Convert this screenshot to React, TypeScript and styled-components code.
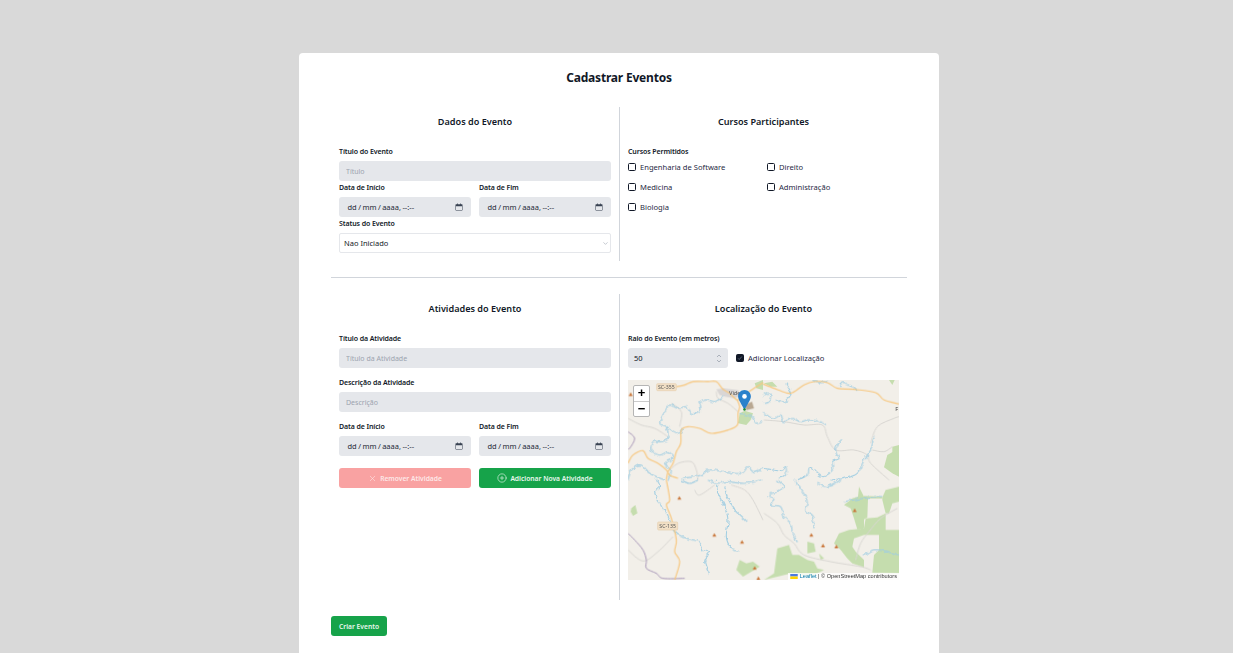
import React from 'react';
import styled, { createGlobalStyle } from 'styled-components';
import { ChevronDown, CirclePlus, X } from 'lucide-react';

const GlobalStyle = createGlobalStyle`
  html, body {
    margin: 0;
    height: 653px;
    overflow: hidden;
    background: #d9d9d9;
    font-family: 'Noto Sans', 'Open Sans', sans-serif;
    color: #111827;
  }
  * { box-sizing: border-box; }
`;

const Card = styled.main`
  width: 640px;
  height: 640px;
  margin: 53px 0 0 299px;
  padding: 16px 32px;
  background: #fff;
  border-radius: 4px;
`;

const PageTitle = styled.h1`
  margin: 0 0 16px;
  height: 22px;
  font-size: 12px;
  line-height: 18px;
  font-weight: 700;
  letter-spacing: -0.2px;
  text-align: center;
`;

const Row = styled.section`
  display: grid;
  grid-template-columns: 288px 288px;
`;

const Column = styled.div<{ $divided?: boolean }>`
  padding: 8px;
  border-left: ${(p) => (p.$divided ? '1px solid #d1d5db' : 'none')};
`;

const Heading = styled.h2`
  margin: 0 0 16px;
  height: 14px;
  font-size: 9.1px;
  line-height: 14px;
  font-weight: 600;
  text-align: center;
`;

const Divider = styled.hr`
  margin: 16px 0;
  height: 1px;
  border: 0;
  background: #d1d5db;
`;

const Label = styled.label`
  display: block;
  height: 12px;
  margin-bottom: 4px;
  font-size: 7px;
  line-height: 13px;
  font-weight: 600;
  letter-spacing: -0.1px;
`;

const Stack = styled.div<{ $gap: number }>`
  display: flex;
  flex-direction: column;
  gap: ${(p) => p.$gap}px;
`;

const TwoUp = styled.div`
  display: grid;
  grid-template-columns: 1fr 1fr;
  gap: 8px;
`;

const TextInput = styled.input`
  display: block;
  width: 100%;
  height: 20px;
  padding: 0 7px;
  border: 0;
  border-radius: 3px;
  background: #e5e7eb;
  font: inherit;
  font-size: 7px;
  color: #111827;
  &::placeholder { color: #9ca3af; opacity: 1; }
`;

const DateBox = styled.div`
  display: flex;
  align-items: center;
  justify-content: space-between;
  height: 20px;
  padding: 0 8px 0 8.5px;
  border-radius: 3px;
  background: #e5e7eb;
  font-size: 7.5px;
  word-spacing: -0.5px;
  color: #1f2937;
`;

const SelectWrap = styled.div`
  position: relative;
  height: 20px;
  color: #9ca3af;
  svg {
    position: absolute;
    right: 2px;
    top: 7px;
  }
`;

const Select = styled.select`
  display: block;
  width: 100%;
  height: 20px;
  padding: 0 4px;
  appearance: none;
  border: 1px solid #e5e7eb;
  border-radius: 2px;
  background: #fff;
  font: inherit;
  font-size: 7.5px;
  color: #111827;
`;

const ButtonRow = styled(TwoUp)`
  margin-top: 4px;
`;

const ActionButton = styled.button<{ $variant: 'danger' | 'success' }>`
  display: flex;
  align-items: center;
  justify-content: center;
  gap: 3px;
  height: 20px;
  padding: 0 8px;
  border: 0;
  border-radius: 3px;
  background: ${(p) => (p.$variant === 'danger' ? '#f9a2a2' : '#16a34a')};
  color: ${(p) => (p.$variant === 'danger' ? '#fde8e8' : '#e9f7ee')};
  font: inherit;
  font-size: 6.7px;
  font-weight: 600;
`;

const SubmitButton = styled(ActionButton)`
  width: 56px;
  margin-top: 16px;
  padding: 0;
`;

const CourseGrid = styled.div`
  display: grid;
  grid-template-columns: 139px 1fr;
  row-gap: 8px;
`;

const CheckLine = styled.label`
  display: flex;
  align-items: center;
  gap: 4px;
  height: 12px;
  font-size: 7.6px;
  color: #1f2a44;
`;

const Box = styled.span<{ $checked?: boolean }>`
  display: flex;
  align-items: center;
  justify-content: center;
  width: 8px;
  height: 8px;
  flex: none;
  border: 1px solid #111827;
  border-radius: 1.5px;
  background: ${(p) => (p.$checked ? '#111827' : '#fff')};
`;

const RadiusRow = styled.div`
  display: flex;
  align-items: center;
  gap: 8px;
  margin-bottom: 12px;
`;

const NumberBox = styled(DateBox)`
  width: 100px;
  padding: 0 6px;
  color: #111827;
`;

const MapFrame = styled.div`
  position: relative;
  height: 200px;
  margin-bottom: 12px;
  overflow: hidden;
  background: #f2efe9;
  line-height: 0;
`;

const ZoomControl = styled.div`
  position: absolute;
  left: 5px;
  top: 5px;
  width: 17px;
  border: 1px solid #b5b5b5;
  border-radius: 2px;
  background: #fff;
`;

const ZoomButton = styled.div<{ $first?: boolean }>`
  height: 15px;
  border-top: ${(p) => (p.$first ? 'none' : '1px solid #ccc')};
  font-family: 'Liberation Sans', sans-serif;
  font-size: 13px;
  line-height: 14px;
  font-weight: 700;
  text-align: center;
  color: #000;
`;

const Attribution = styled.div`
  position: absolute;
  right: 0;
  bottom: 0;
  display: flex;
  align-items: center;
  gap: 1.5px;
  height: 7px;
  padding: 0 2px;
  background: rgba(255, 255, 255, 0.8);
  font-family: 'Liberation Sans', sans-serif;
  font-size: 5.6px;
  line-height: 7px;
  white-space: nowrap;
  color: #333;
  a { color: #0078a8; text-decoration: none; }
`;

const Marker = styled.svg`
  position: absolute;
  left: 110px;
  top: 10px;
`;

const CalendarIcon = () => (
  <svg width="8" height="8" viewBox="0 0 16 16" fill="#374151">
    <path d="M2 2.5h2V1h1.5v1.5h5V1H12v1.5h2c.6 0 1 .4 1 1V14c0 .6-.4 1-1 1H2c-.6 0-1-.4-1-1V3.500c0-.6.4-1 1-1zm0 4V14h12V6.500H2z" />
  </svg>
);

const DateField = () => (
  <DateBox>
    <span>dd / mm / aaaa, --:--</span>
    <CalendarIcon />
  </DateBox>
);

const Check = ({ label, checked }: { label: string; checked?: boolean }) => (
  <CheckLine>
    <Box $checked={checked}>
      {checked && (
        <svg width="6" height="6" viewBox="0 0 8 8" fill="none" stroke="#6b7589" strokeWidth="1">
          <path d="M1.500 4.500 3 6l3.500-4" />
        </svg>
      )}
    </Box>
    {label}
  </CheckLine>
);

// map features, traced per quadrant at 3x scale [dx, dy, points]
type Line = [number, number, string];

const ROADS: Line[] = [
  [0, 0, '145,20 170,15 195,5 240,5 265,5 285,28 305,40 328,60 340,50 370,30 405,8'],
  [0, 0, '328,60 335,80 330,100 328,135 300,150 250,160 215,145 180,140 160,150 158,190 145,215 135,250 120,275 115,300'],
  [0, 0, '0,250 15,225 45,212 60,235 90,250 115,270 125,285 150,295'],
  [408, 0, '-3,12 30,25 65,38 85,38 120,15 150,5 190,8 220,25 270,28 335,38 360,60 405,72'],
  [0, 300, '115,0 125,60 115,75 130,115 145,180 140,215 155,245 140,300'],
];

const MINOR: Line[] = [
  [0, 0, '0,115 40,135 80,145 120,170'],
  [0, 0, '130,70 160,95 155,140'],
  [0, 0, '120,275 150,250 190,245 205,270 210,300'],
  [0, 0, '265,35 270,55 300,70 330,95'],
  [408, 0, '0,120 60,125 120,135 175,135 190,170 215,210 270,210 310,225 320,250 375,300'],
  [408, 0, '320,190 340,140 390,115 405,110'],
  [408, 0, '325,210 360,215 385,200'],
  [0, 300, '0,210 45,243 90,215 135,170'],
  [0, 300, '200,30 215,45 260,15'],
  [0, 300, '310,15 350,30 375,60 405,120'],
  [408, 300, '0,100 40,130 60,165 90,190 120,225 200,245 290,260 320,270'],
  [408, 300, '275,240 290,190 315,155 350,115 400,85'],
];

const RIVERS: Line[] = [
  [0, 0, '285,50 260,65 235,60 215,70 215,95 190,100 175,80 150,85 125,75 110,95 95,130 115,140 120,175 100,185 75,185 70,210 95,225 120,215 135,235 110,250 130,270 120,300'],
  [0, 0, '0,300 10,270 40,255 65,280 110,300'],
  [0, 0, '115,140 150,160 165,145'],
  [0, 0, '165,295 220,285 240,270 290,275 340,280 360,260 375,275 405,265'],
  [0, 0, '335,100 370,110 385,130 405,125'],
  [408, 0, '-3,100 30,115 50,105 60,125 85,115 110,125 130,120 160,122 185,135'],
  [408, 0, '230,178 215,210 225,235 205,245 205,270 175,290 145,265 135,265 130,285 100,300'],
  [408, 0, '0,265 30,270 50,272 65,260 65,285 45,295'],
  [408, 0, '330,170 320,210 300,240 280,280 240,295 200,300'],
  [408, 0, '145,0 165,8 190,5'],
  [408, 0, '225,20 240,8 280,30'],
  [408, 0, '0,70 15,65 20,40 0,45'],
  [408, 0, '35,60 60,65 80,40 65,10'],
  [0, 300, '85,0 95,20 80,35 90,60 110,90 125,120 140,155 175,175 215,185 225,210 245,215 230,245 245,285'],
  [0, 300, '265,0 270,40 290,80 300,120 295,170 310,205 335,215'],
  [0, 300, '290,20 300,55 320,90 355,125'],
  [0, 300, '160,0 185,10 210,0'],
  [0, 300, '240,0 265,10 300,5 350,10 400,0'],
  [408, 300, '40,0 60,20 40,35 15,45 30,60 20,75 50,80 60,110 80,130 85,155 100,190'],
  [408, 300, '90,0 105,20 125,50 130,70 125,90 145,110 150,145'],
  [408, 300, '160,10 190,20 230,0'],
  [408, 300, '240,65 270,60 330,50 355,50'],
  [408, 300, '300,225 330,210 370,215 405,225'],
];

const WOODS: Line[] = [
  [0, 0, '335,100 350,92 375,100 368,120 355,135 330,130'],
  [0, 0, '380,10 405,0 405,30 385,25'],
  [408, 0, '0,10 25,5 40,20 20,20'],
  [408, 0, '370,225 405,205 405,290 385,280 360,262'],
  [408, 0, '385,200 405,195 405,215 385,220'],
  [408, 0, '375,0 392,0 385,15'],
  [0, 300, '335,240 355,250 375,245 395,260 370,275 345,290 325,270'],
  [0, 300, '10,85 22,75 28,100 15,108 8,95'],
  [408, 300, '240,75 265,55 282,50 285,20 300,50 312,55 310,112 300,118 300,145 280,148 270,115 260,85'],
  [408, 300, '300,48 355,50 355,55 300,55'],
  [408, 300, '355,52 365,30 405,20 405,65 385,70 375,100 365,100 355,60'],
  [408, 300, '225,160 255,150 300,145 305,115 340,112 365,100 365,150 405,150 405,280 325,278 330,225 345,210 345,165 300,165 270,175 265,200 275,215 300,240 300,262 265,250 250,235 230,210 210,190'],
  [408, 300, '40,205 75,195 85,225 105,225 130,240 150,245 160,265 180,270 140,290 80,280 0,300 30,280'],
  [408, 300, '130,185 150,190 155,215 130,220'],
  [408, 300, '165,220 180,235 170,240'],
];

const BORDERS: Line[] = [
  [0, 0, '0,155 20,175 5,205 0,205'],
  [0, 300, '0,160 20,180 45,210 55,240 55,265 85,280 105,295 170,295'],
];

const PEAKS: [number, number][] = [
  [8, 43], [154, 354], [259, 465], [342, 486], [380, 564], [391, 595], [680, 391], [550, 465], [585, 497], [625, 500],
];

// catmull-rom through the traced points, so the rivers don't look angular
const smooth = (points: string) => {
  const p = points.split(' ').map((s) => s.split(',').map(Number));
  let d = `M${p[0][0]} ${p[0][1]}`;
  for (let i = 0; i < p.length - 1; i++) {
    const a = p[Math.max(i - 1, 0)];
    const b = p[i];
    const c = p[i + 1];
    const e = p[Math.min(i + 2, p.length - 1)];
    d += `C${b[0] + (c[0] - a[0]) / 6} ${b[1] + (c[1] - a[1]) / 6} ${c[0] - (e[0] - b[0]) / 6} ${c[1] - (e[1] - b[1]) / 6} ${c[0]} ${c[1]}`;
  }
  return d;
};

const Features = ({ lines, color, width, filter }: { lines: Line[]; color: string; width: number; filter?: string }) => (
  <g fill="none" stroke={color} strokeWidth={width} strokeLinejoin="round" filter={filter}>
    {lines.map(([dx, dy, p], i) => (
      <path key={i} d={smooth(p)} transform={`translate(${dx} ${dy})`} />
    ))}
  </g>
);

const MapDrawing = () => (
  <svg width="271" height="200" viewBox="0 0 813 600">
    <defs>
      <filter id="tile" filterUnits="userSpaceOnUse" x="0" y="0" width="813" height="600">
        <feGaussianBlur stdDeviation="0.8" />
      </filter>
      <filter id="meander" filterUnits="userSpaceOnUse" x="0" y="0" width="813" height="600">
        <feTurbulence type="fractalNoise" baseFrequency="0.07" numOctaves="2" seed="4" />
        <feDisplacementMap in="SourceGraphic" scale="14" xChannelSelector="R" yChannelSelector="G" />
      </filter>
    </defs>
    <g filter="url(#tile)">
      {WOODS.map(([dx, dy, p], i) => (
        <polygon key={i} points={p} transform={`translate(${dx} ${dy})`} fill="#c5ddae" />
      ))}
      <path d="M265 28 285 25 330 30 340 45 320 55 290 50 275 45z" fill="#d9d6d5" />
      <path d="M350 75 372 65 378 85 355 90z" fill="#b9a892" />
      <Features lines={MINOR} color="#d8d6d2" width={3} />
      <Features lines={BORDERS} color="#a897b8" width={3} />
      <Features lines={RIVERS} color="#9fcde2" width={3.2} filter="url(#meander)" />
      <Features lines={ROADS} color="#f7c77f" width={3.5} />
      {PEAKS.map(([x, y], i) => (
        <path key={i} d={`M${x - 6} ${y + 5}L${x} ${y - 6}L${x + 6} ${y + 5}z`} fill="#c9763a" />
      ))}
    </g>
    <rect x="86" y="11" width="59" height="21" rx="3" fill="#f2e0c6" stroke="#e6cfae" strokeWidth="2" />
    <text x="115" y="27" fontSize="15.5" fontFamily="Noto Sans, sans-serif" textAnchor="middle" fill="#555">SC-355</text>
    <rect x="89" y="426" width="60" height="24" rx="3" fill="#f2e0c6" stroke="#e6cfae" strokeWidth="2" />
    <text x="119" y="443" fontSize="15.5" fontFamily="Noto Sans, sans-serif" textAnchor="middle" fill="#555">SC-135</text>
    <text x="303" y="46" fontSize="17" fontFamily="Noto Sans, sans-serif" fill="#555">Vide</text>
    <text x="802" y="92" fontSize="17" fontFamily="Noto Sans, sans-serif" fill="#444">F</text>
  </svg>
);

export default function App() {
  return (
    <>
      <GlobalStyle />
      <Card>
        <PageTitle>Cadastrar Eventos</PageTitle>
        <Row>
          <Column>
            <Heading>Dados do Evento</Heading>
            <Label>Título do Evento</Label>
            <TextInput placeholder="Título" />
            <TwoUp>
              <div>
                <Label>Data de Início</Label>
                <DateField />
              </div>
              <div>
                <Label>Data de Fim</Label>
                <DateField />
              </div>
            </TwoUp>
            <Label>Status do Evento</Label>
            <SelectWrap>
              <Select defaultValue="Nao Iniciado">
                <option>Nao Iniciado</option>
              </Select>
              <ChevronDown size={7} strokeWidth={2} />
            </SelectWrap>
          </Column>
          <Column $divided>
            <Heading>Cursos Participantes</Heading>
            <Label>Cursos Permitidos</Label>
            <CourseGrid>
              <Check label="Engenharia de Software" />
              <Check label="Direito" />
              <Check label="Medicina" />
              <Check label="Administração" />
              <Check label="Biologia" />
            </CourseGrid>
          </Column>
        </Row>
        <Divider />
        <Row>
          <Column>
            <Heading>Atividades do Evento</Heading>
            <Stack $gap={8}>
              <div>
                <Label>Título da Atividade</Label>
                <TextInput placeholder="Título da Atividade" />
              </div>
              <div>
                <Label>Descrição da Atividade</Label>
                <TextInput placeholder="Descrição" />
              </div>
              <TwoUp>
                <div>
                  <Label>Data de Início</Label>
                  <DateField />
                </div>
                <div>
                  <Label>Data de Fim</Label>
                  <DateField />
                </div>
              </TwoUp>
              <ButtonRow>
                <ActionButton $variant="danger">
                  <X size={9} strokeWidth={1.5} />
                  Remover Atividade
                </ActionButton>
                <ActionButton $variant="success">
                  <CirclePlus size={10} strokeWidth={1.5} />
                  Adicionar Nova Atividade
                </ActionButton>
              </ButtonRow>
            </Stack>
          </Column>
          <Column $divided>
            <Heading>Localização do Evento</Heading>
            <Label>Raio do Evento (em metros)</Label>
            <RadiusRow>
              <NumberBox>
                <span>50</span>
                <svg width="6" height="9" viewBox="0 0 6 9" fill="none" stroke="#9ca3af" strokeWidth="0.8">
                  <path d="M1 3 3 1l2 2M1 6l2 2 2-2" />
                </svg>
              </NumberBox>
              <Check label="Adicionar Localização" checked />
            </RadiusRow>
            <MapFrame>
              <MapDrawing />
              <ZoomControl>
                <ZoomButton $first>+</ZoomButton>
                <ZoomButton>−</ZoomButton>
              </ZoomControl>
              <Marker width="13" height="21" viewBox="0 0 25 41">
                <path d="M12.500 0C5.600 0 0 5.600 0 12.500 0 19 8 29 12.500 39 17 29 25 19 25 12.500 25 5.600 19.400 0 12.500 0z" fill="#2a81cb" />
                <circle cx="12.500" cy="12.500" r="4.500" fill="#fff" />
                <circle cx="12.500" cy="38" r="2.500" fill="#1a8a2e" />
              </Marker>
              <Attribution>
                <svg width="8" height="5" viewBox="0 0 12 8">
                  <path d="M0 0h12v4H0z" fill="#4c7be1" />
                  <path d="M0 4h12v4H0z" fill="#ffd500" />
                </svg>
                <a>Leaflet</a> | © OpenStreetMap contributors
              </Attribution>
            </MapFrame>
          </Column>
        </Row>
        <SubmitButton $variant="success">Criar Evento</SubmitButton>
      </Card>
    </>
  );
}
